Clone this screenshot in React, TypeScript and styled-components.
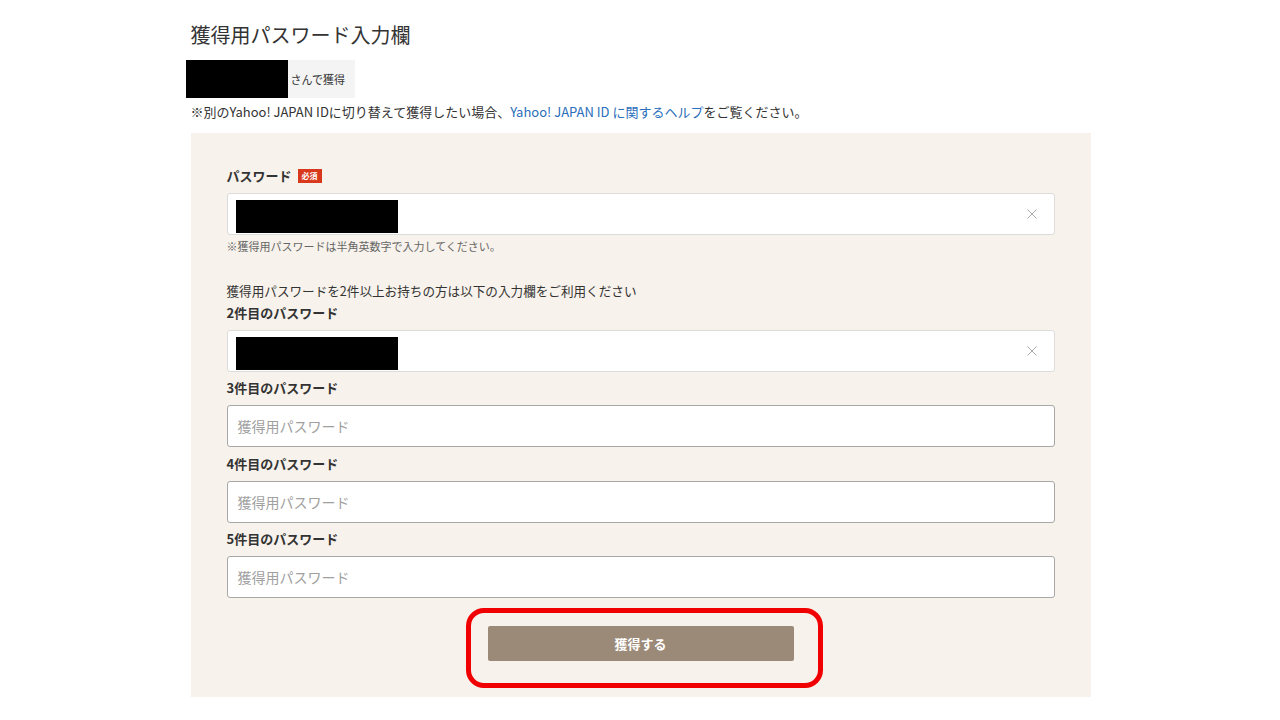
import React from "react";
import styled, { createGlobalStyle } from "styled-components";

const GlobalStyle = createGlobalStyle`
  html, body {
    margin: 0;
    padding: 0;
    background: #fff;
    font-family: "Noto Sans CJK JP", "Noto Sans", sans-serif;
    color: #333;
  }
`;

const Page = styled.div`
  width: 901px;
  margin: 0 auto;
  padding: 20px 0 0 1px;
  box-sizing: border-box;
`;

const Title = styled.h1`
  margin: 0;
  font-size: 20px;
  line-height: 30px;
  font-weight: 400;
  color: #333;
`;

const Account = styled.div`
  display: inline-flex;
  align-items: center;
  margin: 10px 0 0 -5px;
  height: 38px;
  background: #f4f4f4;
  padding-right: 10px;
  font-size: 11px;
  color: #333;
`;

const Redacted = styled.div<{ w: number; h: number }>`
  width: ${p => p.w}px;
  height: ${p => p.h}px;
  background: #000;
  flex-shrink: 0;
`;

const Note = styled.p`
  margin: 0;
  font-size: 13px;
  line-height: 18px;
  color: #333;
  a {
    color: #2a6ebb;
    text-decoration: none;
  }
`;

const Panel = styled.div`
  margin-top: 12px;
  background: #f7f2eb;
  padding: 34px 36px 36px;
  display: flex;
  flex-direction: column;
`;

const Field = styled.div<{ gap?: number }>`
  display: flex;
  flex-direction: column;
  margin-top: ${p => p.gap ?? 0}px;
`;

const Label = styled.div`
  display: flex;
  align-items: center;
  gap: 6px;
  font-size: 13px;
  line-height: 18px;
  font-weight: 700;
  color: #333;
  margin-bottom: 8px;
`;

const Badge = styled.span`
  display: inline-block;
  background: #d8391c;
  color: #fff;
  font-size: 8px;
  line-height: 14px;
  padding: 0 4px;
  font-weight: 700;
`;

const InputBox = styled.div<{ filled?: boolean }>`
  position: relative;
  height: 42px;
  box-sizing: border-box;
  background: #fff;
  border: 1px solid ${p => (p.filled ? "#dcdcdc" : "#a8a8a8")};
  border-radius: 3px;
  display: flex;
  align-items: center;
  padding: 0 10px;
`;

const Secret = styled.div`
  position: absolute;
  left: 8px;
  top: 6px;
  width: 162px;
  height: 33px;
  background: #000;
`;

const Placeholder = styled.span`
  font-size: 14px;
  color: #a0a0a0;
`;

const Clear = styled.svg`
  position: absolute;
  right: 17px;
  top: 50%;
  margin-top: -5px;
`;

const Hint = styled.div`
  font-size: 11px;
  line-height: 14px;
  color: #666;
  margin-top: 4px;
`;

const Lead = styled.div`
  font-size: 12.6px;
  line-height: 18px;
  color: #333;
  margin-top: 29px;
`;

const ButtonWrap = styled.div`
  position: relative;
  align-self: center;
  margin-top: 28px;
`;

const Submit = styled.button`
  display: block;
  width: 306px;
  height: 35px;
  border: none;
  border-radius: 2px;
  background: #9c8a78;
  color: #fff;
  font-family: inherit;
  font-size: 13px;
  font-weight: 700;
`;

const Highlight = styled.div`
  position: absolute;
  left: -22px;
  right: -29px;
  top: -18px;
  bottom: -27px;
  border: 5px solid #f00000;
  border-radius: 18px;
  pointer-events: none;
`;

const ClearIcon = () => (
  <Clear width="10" height="10" viewBox="0 0 10 10">
    <path d="M0.5 0.5 L9.5 9.5 M9.5 0.5 L0.5 9.5" stroke="#aaa" strokeWidth="1" />
  </Clear>
);

const PasswordInput: React.FC<{ filled?: boolean }> = ({ filled }) => (
  <InputBox filled={filled}>
    {filled ? (
      <>
        <Secret />
        <ClearIcon />
      </>
    ) : (
      <Placeholder>獲得用パスワード</Placeholder>
    )}
  </InputBox>
);

export default function App() {
  return (
    <Page>
      <GlobalStyle />
      <Title>獲得用パスワード入力欄</Title>
      <Account>
        <Redacted w={102} h={38} />
        <span style={{ marginLeft: 3 }}>さんで獲得</span>
      </Account>
      <Note>
        ※別のYahoo! JAPAN IDに切り替えて獲得したい場合、
        <a href="#">Yahoo! JAPAN ID に関するヘルプ</a>をご覧ください。
      </Note>
      <Panel>
        <Field>
          <Label>
            パスワード<Badge>必須</Badge>
          </Label>
          <PasswordInput filled />
          <Hint>※獲得用パスワードは半角英数字で入力してください。</Hint>
        </Field>
        <Lead>獲得用パスワードを2件以上お持ちの方は以下の入力欄をご利用ください</Lead>
        <Field gap={4}>
          <Label>2件目のパスワード</Label>
          <PasswordInput filled />
        </Field>
        <Field gap={7}>
          <Label>3件目のパスワード</Label>
          <PasswordInput />
        </Field>
        <Field gap={8}>
          <Label>4件目のパスワード</Label>
          <PasswordInput />
        </Field>
        <Field gap={7}>
          <Label>5件目のパスワード</Label>
          <PasswordInput />
        </Field>
        <ButtonWrap>
          <Submit>獲得する</Submit>
          <Highlight />
        </ButtonWrap>
      </Panel>
    </Page>
  );
}
